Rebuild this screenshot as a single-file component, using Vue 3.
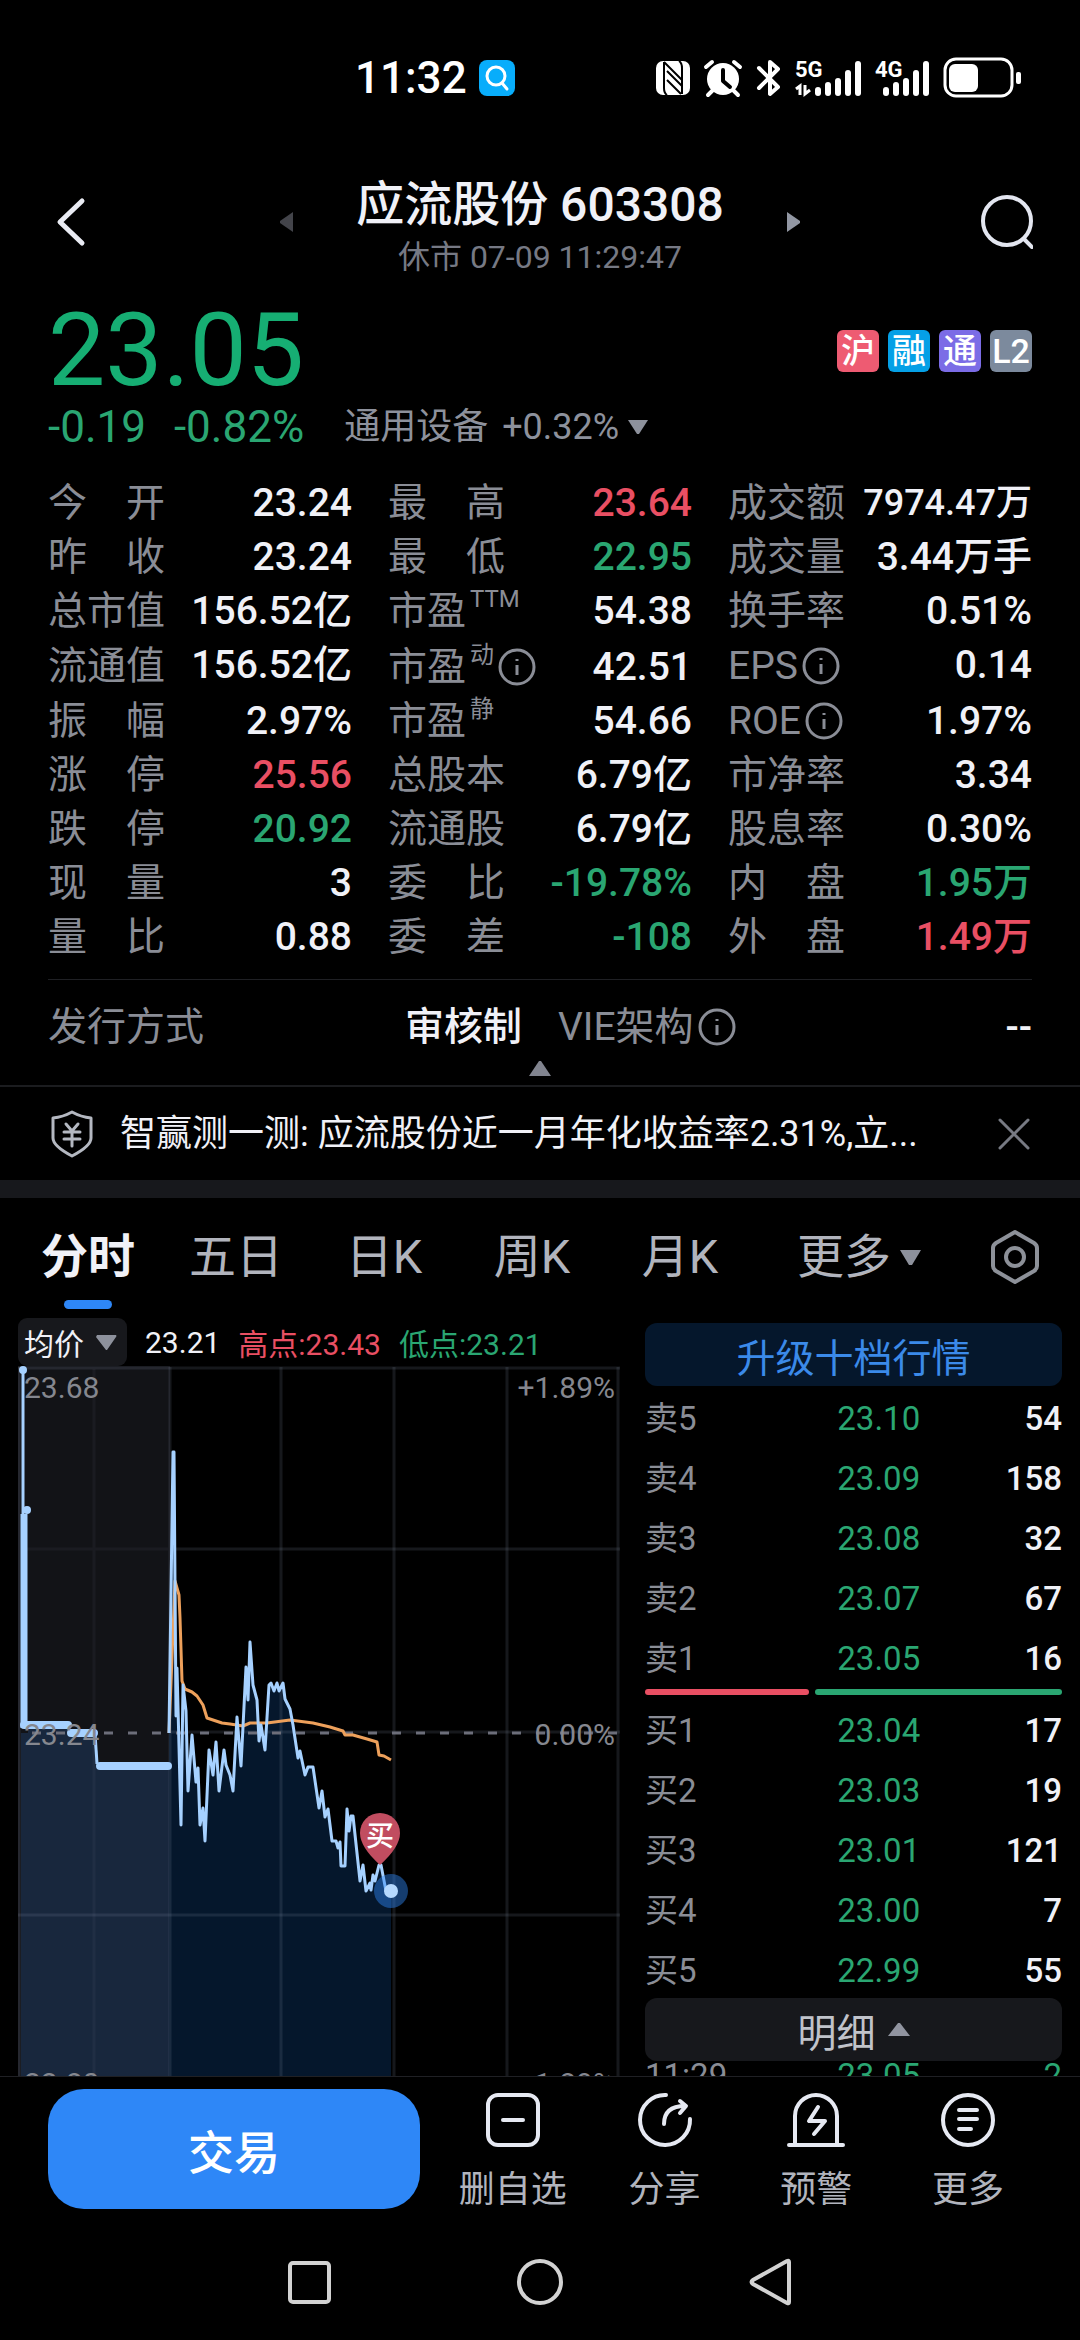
<script setup>
import { ref } from 'vue'

const badges = [
  { text: '沪', cls: 'sh' },
  { text: '融', cls: 'margin' },
  { text: '通', cls: 'connect' },
  { text: 'L2', cls: 'level2' }
]

const quotes = [
  { label: '今　开', value: '23.24' },
  { label: '最　高', value: '23.64', cls: 'up' },
  { label: '成交额', value: '7974.47万', cls: 'long' },
  { label: '昨　收', value: '23.24' },
  { label: '最　低', value: '22.95', cls: 'down' },
  { label: '成交量', value: '3.44万手' },
  { label: '总市值', value: '156.52亿' },
  { label: '市盈', sup: 'TTM', value: '54.38' },
  { label: '换手率', value: '0.51%' },
  { label: '流通值', value: '156.52亿' },
  { label: '市盈', sup: '动', info: true, value: '42.51' },
  { label: 'EPS', info: true, value: '0.14' },
  { label: '振　幅', value: '2.97%' },
  { label: '市盈', sup: '静', value: '54.66' },
  { label: 'ROE', info: true, value: '1.97%' },
  { label: '涨　停', value: '25.56', cls: 'up' },
  { label: '总股本', value: '6.79亿' },
  { label: '市净率', value: '3.34' },
  { label: '跌　停', value: '20.92', cls: 'down' },
  { label: '流通股', value: '6.79亿' },
  { label: '股息率', value: '0.30%' },
  { label: '现　量', value: '3' },
  { label: '委　比', value: '-19.78%', cls: 'down' },
  { label: '内　盘', value: '1.95万', cls: 'down' },
  { label: '量　比', value: '0.88' },
  { label: '委　差', value: '-108', cls: 'down' },
  { label: '外　盘', value: '1.49万', cls: 'up' }
]

const tabs = ['分时', '五日', '日K', '周K', '月K']
const activeTab = ref('分时')

const sells = [
  ['卖5', '23.10', '54'],
  ['卖4', '23.09', '158'],
  ['卖3', '23.08', '32'],
  ['卖2', '23.07', '67'],
  ['卖1', '23.05', '16']
]
const buys = [
  ['买1', '23.04', '17'],
  ['买2', '23.03', '19'],
  ['买3', '23.01', '121'],
  ['买4', '23.00', '7'],
  ['买5', '22.99', '55']
]
const trades = [['11:29', '23.05', '2']]

// 分时价格线
const price = '151,367 155,86 156,86 158,350 159,302 163,459 165,319 168,345 170,425 174,369 178,416 180,402 182,459 185,442 187,475 191,384 195,409 198,376 201,425 206,384 208,399 212,409 215,425 219,351 223,400 228,301 230,334 232,276 235,319 239,334 241,375 243,359 247,384 251,319 253,317 256,325 259,317 261,325 265,317 267,333 272,343 275,359 280,392 282,385 287,409 290,401 295,401 301,442 304,425 307,451 310,443 314,475 318,475 320,482 322,476 323,500 327,500 329,443 331,465 333,450 335,450 342,515 345,499 348,525 352,517 353,524 355,509 357,515 361,499 363,499 368,525 373,525'

// 均价线
const average = '151,367 157,215 161,229 162,252 164,315 167,323 174,326 179,330 185,339 189,352 204,357 212,358 225,360 232,357 249,357 272,354 295,357 312,361 325,365 327,369 335,369 349,373 359,376 361,389 366,390 373,394'

const signalTops = [31, 26, 22, 14, 5]
</script>

<template>
  <div class="screen">
    <div class="status-bar">
      <div class="clock">
        <span>11:32</span>
        <svg width="36" height="36" viewBox="0 0 36 36">
          <rect width="36" height="36" rx="8" fill="#08adfb" />
          <circle cx="17" cy="16" r="9" fill="none" stroke="#fff" stroke-width="3" />
          <path d="M23 23l5 6" stroke="#fff" stroke-width="3" stroke-linecap="round" />
        </svg>
      </div>
      <svg class="status-icons" width="366" height="44" viewBox="0 0 366 44">
        <rect x="0" y="5" width="34" height="34" rx="7" fill="#fff" />
        <path d="M8 6v26q0 5 3 7M26 38V12q0-5-3-7M8 6l18 18M11 15l15 15M11 24l14 14" fill="none" stroke="#000" stroke-width="2" />
        <path d="M50 11l6-5M84 11l-6-5M57 34l-5 5M77 34l5 5" stroke="#fff" stroke-width="4" stroke-linecap="round" />
        <circle cx="67" cy="23" r="16" fill="#fff" />
        <path d="M67 14v11l7 6" fill="none" stroke="#000" stroke-width="4" stroke-linecap="round" stroke-linejoin="round" />
        <path d="M103 12l19 19-8 7V6l8 7-19 19" fill="none" stroke="#fff" stroke-width="4" stroke-linecap="round" stroke-linejoin="round" />
        <text x="139" y="21" class="net">5G</text>
        <path d="M140 33l4-3v9M149 29v9l5-4" fill="none" stroke="#fff" stroke-width="3" />
        <text x="219" y="21" class="net">4G</text>
        <g stroke="#fff" stroke-width="6" stroke-linecap="round">
          <template v-for="(top, i) in signalTops" :key="i">
            <path :d="`M${162 + i * 10} ${top + 3}V37`" />
            <path :d="`M${230 + i * 10} ${top + 3}V37`" />
          </template>
        </g>
        <rect x="289" y="3" width="67" height="37" rx="11" fill="none" stroke="#fff" stroke-width="3" />
        <rect x="293" y="8" width="29" height="28" rx="6" fill="#fff" />
        <rect x="360" y="16" width="5" height="12" rx="2" fill="#fff" />
      </svg>
    </div>

    <header class="header">
      <button class="side" type="button" aria-label="返回">
        <svg width="60" height="60" viewBox="0 0 60 60">
          <path d="M35 9L13 30l22 21" fill="none" stroke="#e9ebf3" stroke-width="5" stroke-linecap="round" stroke-linejoin="round" />
        </svg>
      </button>
      <div class="switcher">
        <button type="button" aria-label="上一只">
          <svg width="14" height="22" viewBox="0 0 14 22"><path d="M14 1v20L1 12V10z" fill="#43444a" /></svg>
        </button>
        <div class="title">
          <h1>应流股份 603308</h1>
          <p>休市 07-09 11:29:47</p>
        </div>
        <button type="button" aria-label="下一只">
          <svg width="14" height="22" viewBox="0 0 14 22"><path d="M0 1v20l13-9v-2z" fill="#9297a3" /></svg>
        </button>
      </div>
      <button class="side" type="button" aria-label="搜索">
        <svg width="60" height="60" viewBox="0 0 60 60">
          <circle cx="34" cy="29" r="24" fill="none" stroke="#e3e6f0" stroke-width="4" />
          <path d="M51 47l8 8" stroke="#e3e6f0" stroke-width="4" stroke-linecap="round" />
        </svg>
      </button>
    </header>

    <section class="summary">
      <div class="price-row">
        <strong class="price down">23.05</strong>
        <div class="badges">
          <span v-for="b in badges" :key="b.text" class="badge" :class="b.cls">{{ b.text }}</span>
        </div>
      </div>
      <div class="change-row">
        <span class="down">-0.19</span>
        <span class="down">-0.82%</span>
        <button class="industry" type="button">
          <span>通用设备</span>
          <span>+0.32%</span>
          <svg width="22" height="16" viewBox="0 0 22 16"><path d="M1 1h20L12 15h-2z" fill="#8d919c" /></svg>
        </button>
      </div>

      <dl class="quotes">
        <div v-for="q in quotes" :key="q.label + (q.sup || '')" class="quote" :class="{ tall: q.sup === '动' }">
          <dt>
            {{ q.label }}<sup v-if="q.sup">{{ q.sup }}</sup>
            <svg v-if="q.info" class="info" width="38" height="38" viewBox="0 0 38 38">
              <circle cx="19" cy="19" r="17" />
              <path d="M19 17v10M19 11v2" />
            </svg>
          </dt>
          <dd :class="q.cls">{{ q.value }}</dd>
        </div>
      </dl>

      <dl class="issue">
        <div class="quote">
          <dt>发行方式</dt>
          <dd>审核制</dd>
        </div>
        <div class="quote">
          <dt>
            VIE架构
            <svg class="info" width="38" height="38" viewBox="0 0 38 38">
              <circle cx="19" cy="19" r="17" />
              <path d="M19 17v10M19 11v2" />
            </svg>
          </dt>
          <dd>--</dd>
        </div>
      </dl>
      <button class="collapse" type="button" aria-label="收起">
        <svg width="22" height="15" viewBox="0 0 22 15"><path d="M10 0h2l10 15H0z" fill="#81848f" /></svg>
      </button>
    </section>

    <section class="notice">
      <svg width="44" height="50" viewBox="0 0 44 50">
        <g fill="none" stroke="#b4b8c1" stroke-width="3" stroke-linecap="round" stroke-linejoin="round">
          <path d="M22 3Q31 8 41 9v20q0 8-19 18Q3 37 3 29V9Q13 8 22 3z" />
          <path d="M16 15l6 7 6-7M14 23h16M14 30h16M22 23v14" />
        </g>
      </svg>
      <a href="#">智赢测一测: 应流股份近一月年化收益率2.31%,立...</a>
      <button type="button" aria-label="关闭">
        <svg width="32" height="32" viewBox="0 0 32 32">
          <path d="M2 2l28 28M30 2L2 30" stroke="#777a83" stroke-width="3" stroke-linecap="round" />
        </svg>
      </button>
    </section>

    <nav class="tabs">
      <button
        v-for="tab in tabs"
        :key="tab"
        class="tab"
        :class="{ active: tab === activeTab }"
        type="button"
        @click="activeTab = tab"
      >
        {{ tab }}
      </button>
      <button class="tab more" type="button">
        更多
        <svg width="21" height="15" viewBox="0 0 21 15"><path d="M0 0h21L12 15h-3z" fill="#8d919c" /></svg>
      </button>
      <button class="tab gear" type="button" aria-label="设置">
        <svg width="52" height="56" viewBox="0 0 52 56">
          <g fill="none" stroke="#8d9199" stroke-width="4" stroke-linejoin="round">
            <path d="M26 3l19 11q3 2 3 5v18q0 3-3 5L26 53 7 42q-3-2-3-5V19q0-3 3-5z" />
            <circle cx="26" cy="28" r="9" />
          </g>
        </svg>
      </button>
    </nav>

    <main class="market">
      <section class="chart-col">
        <div class="legend">
          <button class="avg" type="button">
            均价
            <svg width="21" height="15" viewBox="0 0 21 15"><path d="M1 0h19q1 1 0 2L11 15h-1L0 2z" fill="#8d919c" /></svg>
          </button>
          <span>23.21</span>
          <span class="up">高点:23.43</span>
          <span class="down">低点:23.21</span>
        </div>
        <svg class="chart" viewBox="0 0 602 732">
          <rect x="0" y="0" width="152" height="732" fill="#121317" />
          <path d="M3 732V367H10V359H51V367H78V401H151V732z" fill="#18273d" />
          <polygon :points="`${price} 373,732 151,732`" fill="#05172c" />
          <g fill="none" stroke="#8a93ad" stroke-opacity=".16" stroke-width="3">
            <path d="M0 2H602M152 183H602M152 366H602M0 549H602" />
            <path d="M1 1V732M152 1V732M263 1V732M376 1V732M489 1V732M600 1V732" />
          </g>
          <path d="M3 183H150M76 3V732" stroke="#8a93ad" stroke-opacity=".07" stroke-width="3" />
          <path d="M14 367H602" stroke="#6c6e7a" stroke-width="3" stroke-dasharray="9 15" />
          <polyline :points="average" fill="none" stroke="#eda05b" stroke-width="3" stroke-linejoin="round" />
          <polyline :points="price" fill="none" stroke="#a6d1ff" stroke-width="3" stroke-linejoin="round" />
          <!-- 集合竞价 -->
          <g fill="none" stroke="#a6d1ff">
            <path d="M5 4V150" stroke-width="3" />
            <path d="M6 148V362" stroke-width="7" />
            <path d="M6 359H50M53 367H76M82 400H150" stroke-width="8" stroke-linecap="round" />
            <path d="M77 367L79 398" stroke-width="3" />
          </g>
          <circle cx="5" cy="4" r="4" fill="#a6d1ff" />
          <circle cx="9" cy="144" r="4" fill="#a6d1ff" />
          <g class="axis">
            <text x="6" y="32">23.68</text>
            <text x="6" y="379">23.24</text>
            <text x="6" y="728">22.80</text>
            <text x="597" y="32" text-anchor="end">+1.89%</text>
            <text x="597" y="379" text-anchor="end">0.00%</text>
            <text x="597" y="728" text-anchor="end">-1.89%</text>
          </g>
          <path d="M362 499Q342 481 342 467a20 20 0 0 1 40 0Q382 481 362 499z" fill="#c14d60" />
          <text x="362" y="480" class="pin" text-anchor="middle">买</text>
          <circle cx="373" cy="525" r="17" fill="#2e87f7" fill-opacity=".45" />
          <circle cx="373" cy="525" r="7" fill="#b5d9ff" />
        </svg>
      </section>

      <section class="book">
        <button class="upgrade" type="button">升级十档行情</button>
        <table>
          <tbody>
            <tr v-for="r in sells" :key="r[0]">
              <th scope="row">{{ r[0] }}</th>
              <td class="down">{{ r[1] }}</td>
              <td class="vol">{{ r[2] }}</td>
            </tr>
          </tbody>
        </table>
        <div class="ratio"><i class="buy"></i><i class="sell"></i></div>
        <table>
          <tbody>
            <tr v-for="r in buys" :key="r[0]">
              <th scope="row">{{ r[0] }}</th>
              <td class="down">{{ r[1] }}</td>
              <td class="vol">{{ r[2] }}</td>
            </tr>
          </tbody>
        </table>
        <button class="detail" type="button">
          明细
          <svg width="22" height="14" viewBox="0 0 22 14"><path d="M10 0h2l10 13H0z" fill="#9194a0" /></svg>
        </button>
        <table class="trades">
          <tbody>
            <tr v-for="(r, i) in trades" :key="i">
              <th scope="row">{{ r[0] }}</th>
              <td class="down">{{ r[1] }}</td>
              <td class="down">{{ r[2] }}</td>
            </tr>
          </tbody>
        </table>
      </section>
    </main>

    <footer class="toolbar">
      <button class="trade" type="button">交易</button>
      <div class="actions">
        <button type="button">
          <svg viewBox="0 0 60 56">
            <rect x="5" y="3" width="50" height="50" rx="10" />
            <path d="M20 28h20" />
          </svg>
          删自选
        </button>
        <button type="button">
          <svg viewBox="0 0 60 56">
            <path d="M31 3A25 25 0 1 0 55 27" />
            <path d="M29 32q0-18 21-18M45 9l6 5-6 7" />
          </svg>
          分享
        </button>
        <button type="button">
          <svg viewBox="0 0 60 56">
            <path d="M9 52V24a21 21 0 0 1 42 0v28M3 53h54" />
            <path d="M32 15l-9 14h16L28 42" />
          </svg>
          预警
        </button>
        <button type="button">
          <svg viewBox="0 0 60 56">
            <circle cx="30" cy="28" r="25" />
            <path d="M21 18h18M21 27h18M21 37h12" />
          </svg>
          更多
        </button>
      </div>
    </footer>

    <nav class="system-nav">
      <button type="button" aria-label="最近任务">
        <svg width="48" height="48" viewBox="0 0 48 48"><rect x="5" y="5" width="39" height="39" rx="3" /></svg>
      </button>
      <button type="button" aria-label="主屏幕">
        <svg width="48" height="48" viewBox="0 0 48 48"><circle cx="24" cy="24" r="21" /></svg>
      </button>
      <button type="button" aria-label="返回">
        <svg width="48" height="48" viewBox="0 0 48 48"><path d="M42 4v40q0 2-2 1L6 26q-3-2 0-4L40 3q2-1 2 1z" /></svg>
      </button>
    </nav>
  </div>
</template>

<style>
body {
  background: #000;
}
</style>

<style scoped>
.screen {
  display: flex;
  flex-direction: column;
  height: 100vh;
  overflow: hidden;
  background: #000;
  color: #f0f1f7;
  font-family: Roboto, "Noto Sans CJK SC", sans-serif;
}

button {
  margin: 0;
  padding: 0;
  border: 0;
  background: none;
  color: inherit;
  font: inherit;
}

svg {
  display: block;
  flex: none;
}

h1,
p,
dl,
dd {
  margin: 0;
}

.up {
  color: #e94f63;
}

.down {
  color: #2aa672;
}

.status-bar {
  display: flex;
  align-items: center;
  justify-content: space-between;
  height: 156px;
  padding: 0 58px 0 355px;
  flex: none;
}

.clock {
  display: flex;
  align-items: center;
  gap: 12px;
  font-size: 44px;
  font-weight: 500;
  color: #fff;
}

.net {
  font-size: 22px;
  font-weight: 700;
  fill: #fff;
}

.header {
  display: flex;
  align-items: center;
  justify-content: space-between;
  height: 132px;
  padding: 0 47px;
  flex: none;
}

.switcher {
  display: flex;
  align-items: center;
  justify-content: space-between;
  width: 53%;
}

.title {
  padding-top: 6px;
  text-align: center;
}

.title h1 {
  font-size: 48px;
  font-weight: 500;
  line-height: 64px;
}

.title p {
  font-size: 32px;
  line-height: 40px;
  color: #767984;
}

.summary {
  padding: 0 48px;
  flex: none;
}

.price-row {
  display: flex;
  align-items: center;
  justify-content: space-between;
  margin-top: 10px;
}

.price {
  font-size: 102px;
  font-weight: 400;
  line-height: 104px;
  color: #16ae73;
}

.badges {
  display: flex;
  gap: 9px;
  padding-top: 2px;
}

.badge {
  width: 42px;
  border-radius: 6px;
  font-size: 34px;
  font-weight: 500;
  line-height: 42px;
  text-align: center;
  color: #fff;
}

.sh {
  background: #ee5b72;
}

.margin {
  background: #05a0e6;
}

.connect {
  background: #7b6ce6;
}

.level2 {
  background: #7c8a9d;
}

.change-row {
  display: flex;
  align-items: center;
  gap: 28px;
  font-size: 44px;
  line-height: 50px;
}

.industry {
  display: flex;
  align-items: center;
  gap: 14px;
  margin-left: 12px;
  font-size: 36px;
  color: #8d919c;
}

.industry svg {
  margin-left: -6px;
}

.quotes {
  display: grid;
  grid-template-columns: repeat(3, 1fr);
  column-gap: 36px;
  margin-top: 24px;
  padding-bottom: 15px;
}

.quote {
  display: flex;
  justify-content: space-between;
  font-size: 39px;
  line-height: 54px;
  white-space: nowrap;
}

.tall {
  padding-top: 2px;
}

.quote dt {
  display: flex;
  align-items: center;
  gap: 4px;
  color: #8a8d96;
}

.quote dd {
  font-weight: 500;
}

.quote .long {
  font-size: 36px;
}

sup {
  align-self: flex-start;
  font-size: 24px;
  line-height: 30px;
}

.info {
  fill: none;
  stroke: #8a8d96;
  stroke-width: 3;
}

.issue {
  display: grid;
  grid-template-columns: repeat(2, 1fr);
  column-gap: 36px;
  padding-top: 20px;
  border-top: 1px solid #1f2024;
}

.collapse {
  display: block;
  margin: 7px auto 9px;
}

.notice {
  display: flex;
  align-items: center;
  gap: 26px;
  height: 93px;
  padding: 0 50px;
  border-top: 2px solid #1b1c1f;
  border-bottom: 18px solid #17181c;
  flex: none;
}

.notice a {
  flex: 1;
  min-width: 0;
  overflow: hidden;
  font-size: 36px;
  line-height: 48px;
  color: inherit;
  text-decoration: none;
  text-overflow: ellipsis;
  white-space: nowrap;
}

.tabs {
  display: grid;
  grid-template-columns: repeat(5, 148fr) 210fr 102fr;
  padding: 24px 14px 9px;
  flex: none;
}

.tab {
  display: flex;
  flex-wrap: wrap;
  align-items: center;
  justify-content: center;
  gap: 0 9px;
  height: 87px;
  padding: 3px 0 20px;
  font-size: 47px;
  line-height: 64px;
  color: #b1b4bd;
}

.tab.active {
  padding-bottom: 0;
  font-weight: 700;
  color: #f0f1f7;
}

.tab.active::after {
  content: "";
  width: 48px;
  height: 9px;
  margin: 11px 40px 0;
  border-radius: 5px;
  background: #2e87f7;
}

.market {
  display: grid;
  grid-template-columns: 602fr 417fr;
  column-gap: 25px;
  flex: 1;
  min-height: 0;
  overflow: hidden;
  padding: 0 18px;
}

.legend {
  display: flex;
  align-items: center;
  gap: 18px;
  height: 48px;
  font-size: 30px;
}

.avg {
  display: flex;
  align-items: center;
  gap: 12px;
  height: 48px;
  padding: 0 10px 0 6px;
  border-radius: 9px;
  background: #17181c;
}

.chart {
  width: 100%;
}

.axis {
  font-size: 30px;
  fill: #85878f;
}

.pin {
  font-size: 28px;
  font-weight: 500;
  fill: #fff;
}

.upgrade,
.detail {
  display: flex;
  align-items: center;
  justify-content: center;
  gap: 12px;
  width: 100%;
  height: 63px;
  border-radius: 12px;
  font-size: 39px;
}

.upgrade {
  margin-top: 5px;
  background: #05172c;
  color: #3b8ae9;
}

.detail {
  background: #17181c;
  color: #c0c3ca;
}

.book table {
  width: 100%;
  table-layout: fixed;
  border-collapse: collapse;
}

.book th,
.book td {
  padding: 6px 0 0;
  font-size: 33px;
  font-weight: 400;
  line-height: 54px;
  text-align: right;
}

.book th {
  width: 34%;
  text-align: left;
  color: #8a8d96;
}

.book .vol {
  font-weight: 500;
}

.book td:nth-child(2) {
  width: 32%;
}

.book .trades th,
.book .trades td {
  padding: 0;
  line-height: 30px;
}

.ratio {
  display: flex;
  gap: 6px;
  padding: 3px 0;
}

.ratio i {
  height: 6px;
  border-radius: 3px;
}

.ratio .buy {
  flex: 2;
  background: #e94f63;
}

.ratio .sell {
  flex: 3;
  background: #2aa672;
}

.toolbar {
  display: flex;
  gap: 17px;
  padding: 12px 36px 0 48px;
  border-top: 1px solid #1f2024;
  flex: none;
}

.trade {
  width: 372px;
  height: 120px;
  border-radius: 36px;
  background: #2e87f7;
  color: #fff;
  font-size: 46px;
  font-weight: 500;
}

.actions {
  display: grid;
  grid-template-columns: repeat(4, 1fr);
  flex: 1;
}

.actions button {
  display: flex;
  flex-direction: column;
  align-items: center;
  gap: 18px;
  padding-top: 3px;
  font-size: 36px;
  line-height: 48px;
  color: #b1b4bd;
}

.actions svg {
  width: 60px;
  height: 56px;
  fill: none;
  stroke: #e6e9f2;
  stroke-width: 4;
  stroke-linecap: round;
  stroke-linejoin: round;
}

.system-nav {
  display: flex;
  justify-content: center;
  gap: 183px;
  padding: 44px 0 34px;
  flex: none;
}

.system-nav svg {
  fill: none;
  stroke: #d2d2d2;
  stroke-width: 4;
}
</style>
